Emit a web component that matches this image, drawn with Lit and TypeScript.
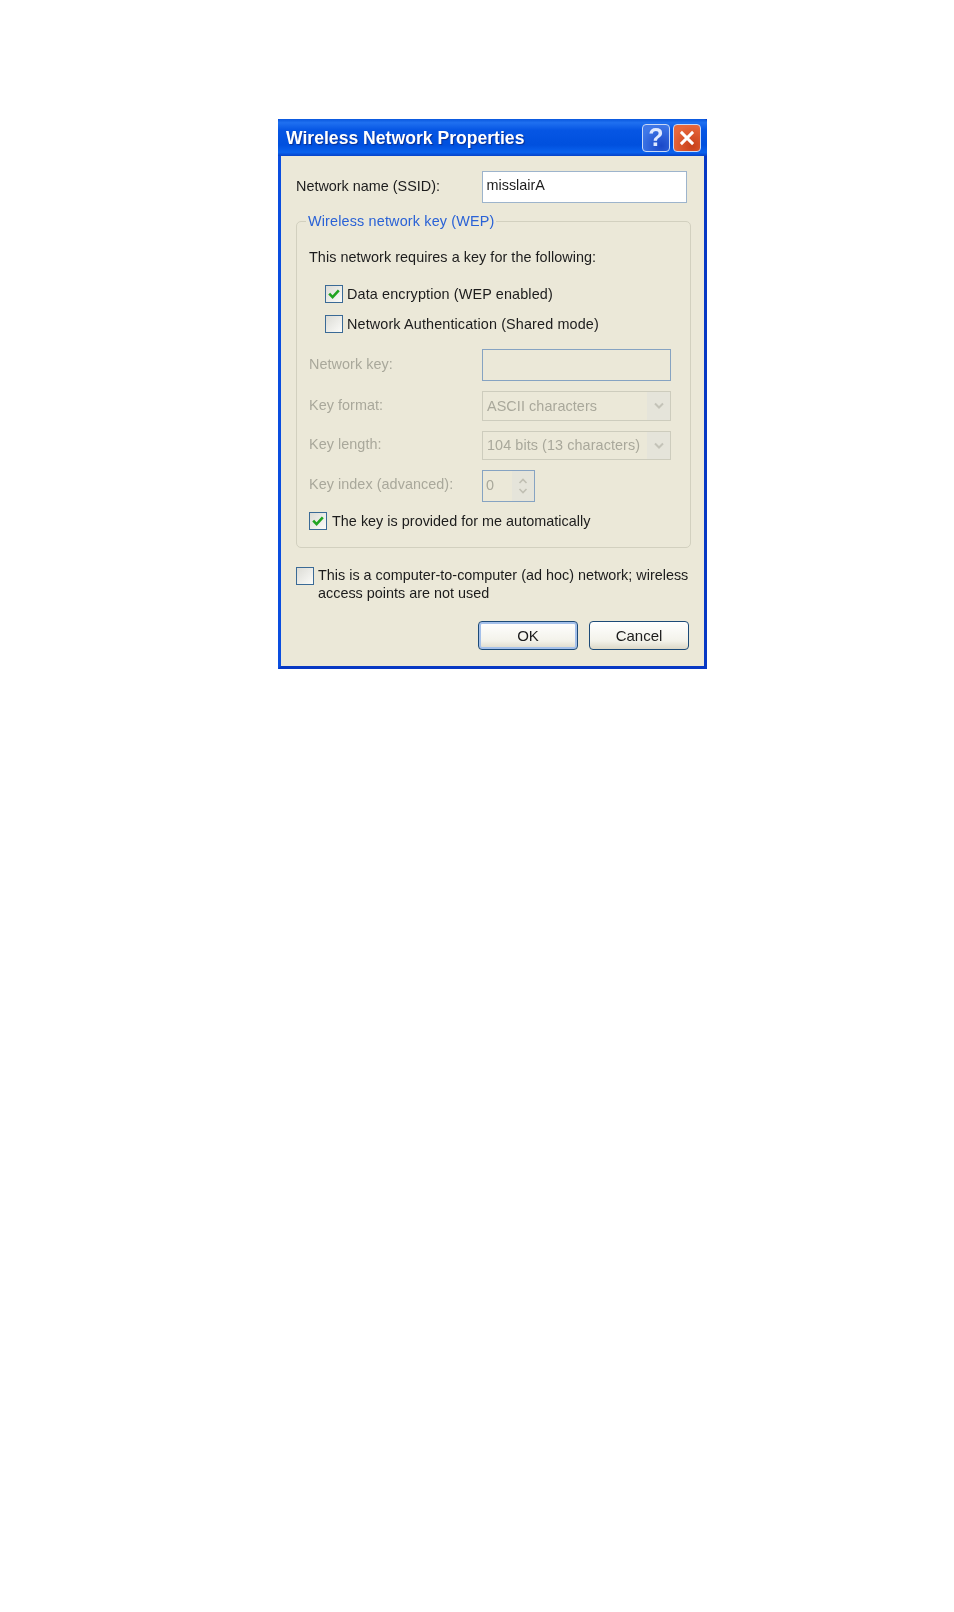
import { LitElement, html, css, svg } from "lit";
import { customElement } from "lit/decorators.js";

const check = svg`<svg class="tick" viewBox="0 0 14 14" width="14" height="14"><path d="M2.2 6.6 L5.6 10.2 L11.8 3.4" fill="none" stroke="#21a421" stroke-width="2.6"/></svg>`;
const chevron = svg`<svg viewBox="0 0 12 8" width="12" height="8"><path d="M2 1.5 L6 5.5 L10 1.5" fill="none" stroke="#c4c3b8" stroke-width="2"/></svg>`;
const spinUp = svg`<svg viewBox="0 0 10 6" width="10" height="6"><path d="M1.5 5 L5 1.5 L8.5 5" fill="none" stroke="#c0bfb3" stroke-width="1.6"/></svg>`;
const spinDown = svg`<svg viewBox="0 0 10 6" width="10" height="6"><path d="M1.5 1 L5 4.5 L8.5 1" fill="none" stroke="#c0bfb3" stroke-width="1.6"/></svg>`;
const closeX = svg`<svg viewBox="0 0 18 18" width="20" height="20"><path d="M3.5 3.5 L14.5 14.5 M14.5 3.5 L3.5 14.5" fill="none" stroke="#fff" stroke-width="2.6"/></svg>`;

@customElement("app-root")
export class AppRoot extends LitElement {
  static styles = css`
    :host { display: block; background: #fff; min-height: 1612px; padding: 119px 0 0 278px; box-sizing: border-box;
      font-family: "Liberation Sans", Arial, sans-serif; font-size: 14.4px; color: #1c1c1c; }
    .dialog { width: 429px; height: 550px; box-sizing: border-box; display: flex; flex-direction: column;
      border: 3px solid #0a4ee0; border-top: none; border-right-color: #0738c4; border-bottom-color: #0738c4;
      background: #ebe8d8; filter: blur(0.4px); }
    .title { height: 37px; margin: 0 -3px; flex: none; display: flex; align-items: center; padding: 2px 6px 0 8px; box-sizing: border-box;
      border-radius: 3px 3px 0 0;
      background: linear-gradient(180deg, #0a58de 0, #1f70f0 10%, #0656e4 30%, #0050de 70%, #0a62ee 90%, #0642c8 100%); }
    .title-text { flex: 1; color: #fff; font-weight: 700; font-size: 17.6px; text-shadow: 1px 1px 1px #0b2f92; }
    .tbtn { width: 28px; height: 28px; margin-top: -2px; box-sizing: border-box; border: 1.5px solid #c8d8f6; border-radius: 4px;
      display: flex; align-items: center; justify-content: center; color: #dfe9ff; font-weight: 700; font-size: 25px; line-height: 1; }
    .help { background: radial-gradient(circle at 70% 80%, #1a48c8, #3f78e8 75%); margin-right: 3px; }
    .close { background: radial-gradient(circle at 70% 80%, #c8401a, #e8683c 75%); }
    .body { flex: 1; padding: 15px 13px 0 15px; }
    .ssid { display: flex; align-items: center; height: 32px; }
    .ssid label { width: 186px; padding-bottom: 2px; }
    .text { box-sizing: border-box; border: 1.5px solid #86a3c2; background: #fff; display: flex; align-items: center; padding-left: 3.5px; }
    .ssid .text { width: 205px; height: 32px; padding-bottom: 5px; border-color: #9db4cc; }
    .group { margin-top: 18px; border: 1px solid #d2d0bf; border-radius: 5px; padding: 0 0 0 13px; height: 327px; box-sizing: border-box; }
    .legend { width: fit-content; margin: -10px 0 0 -4px; padding: 0 2px; height: 18px; line-height: 18px; background: #ebe8d8; color: #2a62d6; letter-spacing: 0.16px; }
    .intro { margin-top: 18px; line-height: 18px; margin-left: -1px; letter-spacing: 0.05px; }
    .cb-row { display: flex; align-items: center; gap: 4px; height: 18px; line-height: 18px; }
    .cb-row.indent { margin-left: 15px; letter-spacing: 0.13px; }
    .first { margin-top: 19px; }
    .second { margin-top: 12px; }
    .cb { width: 18px; height: 18px; flex: none; box-sizing: border-box; border: 1.75px solid #3a6a96;
      background: linear-gradient(135deg, #dcdcd6, #fbfbf8); display: flex; align-items: center; justify-content: center; }
    .grid { margin-top: 16px; display: grid; grid-template-columns: 172px 189px; grid-template-rows: 32px 30px 29px 32px; row-gap: 10px; align-items: center; color: #a9a89b; }
    .lbl { margin-left: -1px; padding-bottom: 3px; letter-spacing: 0.05px; }
    .lbl.up { padding-bottom: 5px; }
    .grid .text { height: 32px; background: #ebe8d8; }
    .select { box-sizing: border-box; height: 100%; border: 1px solid #cdccbd; display: flex; align-items: center; padding-left: 4px; letter-spacing: 0.08px; }
    .select span { flex: 1; padding-bottom: 1px; }
    .select.tight span { padding-bottom: 2px; }
    .arrow { width: 23px; height: 100%; background: #e5e4da; display: flex; align-items: center; justify-content: center; }
    .spin { box-sizing: border-box; width: 53px; height: 32px; border: 1.5px solid #86a3c2; display: flex; align-items: center; padding-left: 3px; }
    .spin span { flex: 1; padding-bottom: 3px; }
    .spin-btns { width: 22px; height: 100%; background: #e5e4da; display: flex; flex-direction: column; align-items: center; justify-content: center; gap: 4px; }
    .auto { margin-top: 10px; margin-left: -1px; gap: 5px; letter-spacing: 0.02px; }
    .auto span { padding-bottom: 1px; }
    .adhoc { margin-top: 19px; display: flex; gap: 4px; line-height: 18px; }
    .adhoc p { margin: -1px 0 0; }
    .buttons { margin-top: 19px; padding-right: 2px; display: flex; justify-content: flex-end; gap: 11px; }
    .btn { width: 100px; height: 29px; box-sizing: border-box; border: 1.5px solid #1c4a78; border-radius: 4px;
      background: linear-gradient(180deg, #fff, #f3f2ea 70%, #dcd8c8); display: flex; align-items: center; justify-content: center;
      font-size: 15px; }
    .btn.default { box-shadow: inset 0 0 0 2px #a4c0ea; }
  `;

  render() {
    return html`
      <div class="dialog">
        <div class="title">
          <div class="title-text">Wireless Network Properties</div>
          <div class="tbtn help">?</div>
          <div class="tbtn close">${closeX}</div>
        </div>
        <div class="body">
          <div class="ssid">
            <label>Network name (SSID):</label>
            <div class="text">misslairA</div>
          </div>
          <div class="group">
            <div class="legend">Wireless network key (WEP)</div>
            <div class="intro">This network requires a key for the following:</div>
            <div class="cb-row indent first"><div class="cb">${check}</div>Data encryption (WEP enabled)</div>
            <div class="cb-row indent second"><div class="cb"></div>Network Authentication (Shared mode)</div>
            <div class="grid">
              <div class="lbl">Network key:</div>
              <div class="text"></div>
              <div class="lbl">Key format:</div>
              <div class="select"><span>ASCII characters</span><div class="arrow">${chevron}</div></div>
              <div class="lbl">Key length:</div>
              <div class="select tight"><span>104 bits (13 characters)</span><div class="arrow">${chevron}</div></div>
              <div class="lbl up">Key index (advanced):</div>
              <div class="spin"><span>0</span><div class="spin-btns">${spinUp}${spinDown}</div></div>
            </div>
            <div class="cb-row auto"><div class="cb">${check}</div><span>The key is provided for me automatically</span></div>
          </div>
          <div class="adhoc">
            <div class="cb"></div>
            <p>This is a computer-to-computer (ad hoc) network; wireless<br />access points are not used</p>
          </div>
          <div class="buttons">
            <div class="btn default">OK</div>
            <div class="btn">Cancel</div>
          </div>
        </div>
      </div>
    `;
  }
}
